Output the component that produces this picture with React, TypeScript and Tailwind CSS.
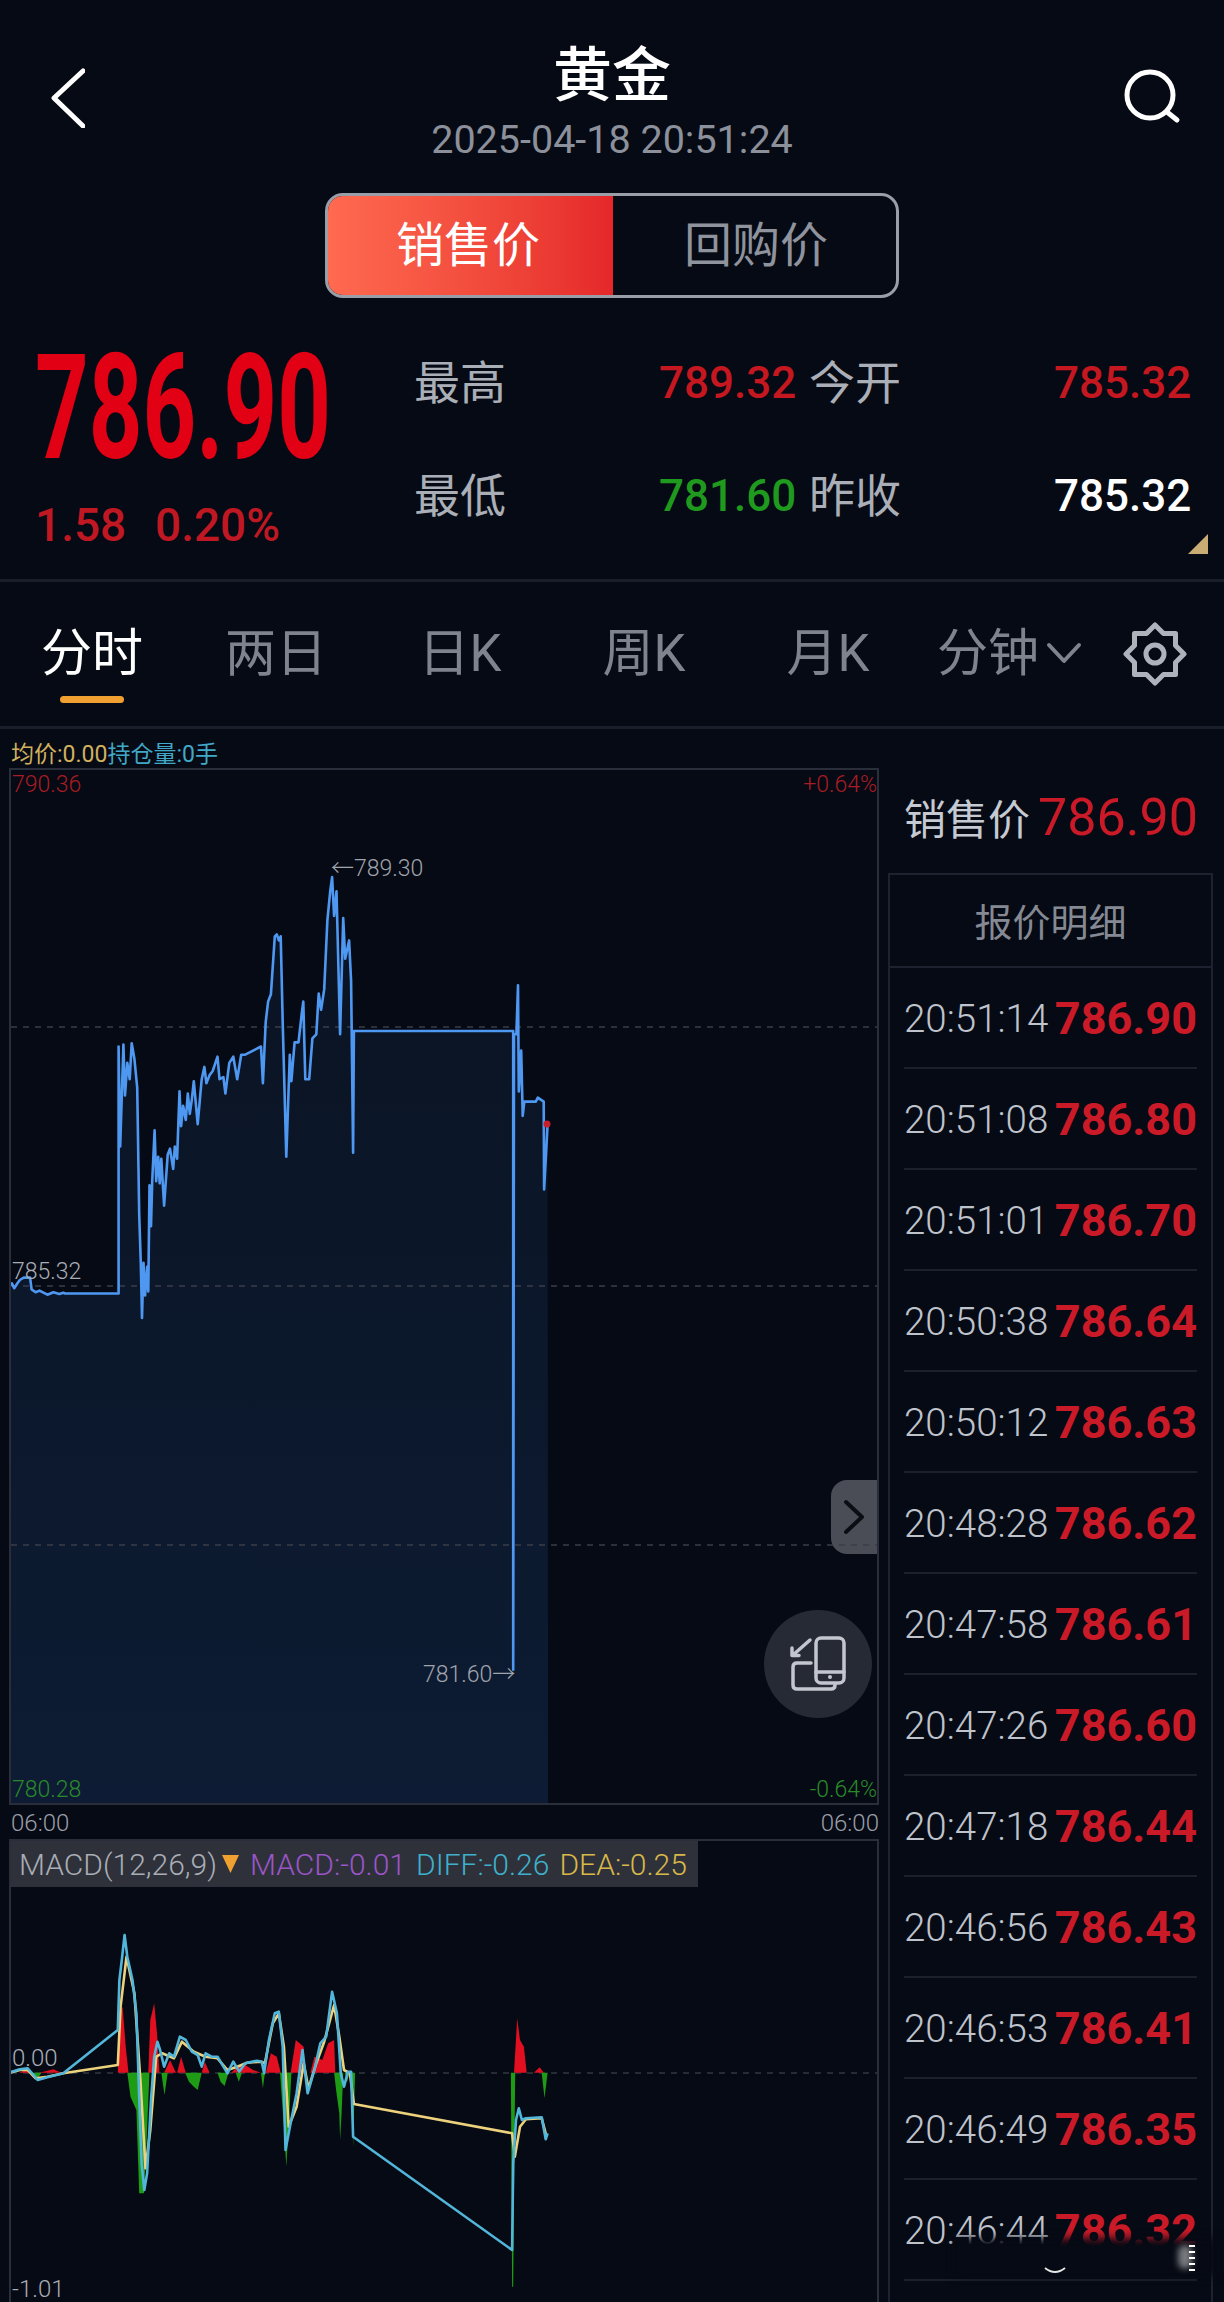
import React from "react";

const PRICE: number[][] = [[24,1385],[30,1380],[36,1392],[44,1380],[50,1372],[60,1366],[76,1366],[80,1395],[90,1402],[100,1398],[120,1408],[135,1402],[150,1406],[160,1403],[165,1405],[300,1405],[300,800],[304,1045],[312,795],[316,920],[322,840],[328,880],[333,792],[340,830],[347,900],[352,1210],[356,1330],[359,1465],[363,1330],[367,1410],[372,1340],[375,1400],[378,1140],[382,1240],[385,1130],[391,1005],[395,1130],[400,1070],[404,1135],[408,1075],[415,1190],[424,1065],[430,1050],[438,1100],[442,1045],[448,1075],[454,910],[458,995],[463,945],[470,980],[475,915],[480,965],[485,930],[490,885],[500,990],[510,880],[517,850],[522,890],[530,870],[538,860],[550,825],[555,880],[565,875],[570,915],[580,840],[590,825],[600,880],[610,820],[620,820],[640,810],[660,800],[665,890],[672,740],[678,690],[685,672],[695,530],[700,525],[705,540],[710,530],[715,740],[724,1070],[733,820],[737,885],[745,790],[755,790],[763,720],[767,690],[772,880],[782,880],[790,780],[800,770],[806,670],[812,710],[820,660],[828,490],[835,420],[840,385],[845,480],[851,420],[860,770],[868,485],[873,585],[883,540],[888,640],[893,1060],[895,762],[1298,762],[1298,2327],[1300,770],[1306,770],[1310,650],[1312,910],[1318,810],[1322,970],[1326,935],[1355,935],[1360,925],[1375,935],[1376,1150],[1381,1060],[1385,990]];

const DIFF: number[][] = [[24,878],[50,868],[70,865],[85,885],[95,900],[120,892],[160,880],[298,750],[302,600],[308,540],[315,465],[322,530],[335,600],[345,700],[352,950],[358,1150],[365,1230],[372,1180],[382,960],[390,830],[398,785],[405,810],[415,860],[428,820],[440,830],[455,770],[470,780],[485,815],[500,825],[510,860],[520,820],[535,830],[550,830],[575,880],[590,845],[605,875],[620,850],[650,842],[662,845],[668,880],[680,780],[695,700],[705,695],[715,800],[722,1110],[735,1030],[750,940],[765,810],[778,940],[795,870],[810,790],[825,770],[840,635],[852,700],[862,880],[870,920],[880,875],[888,875],[893,1070],[1295,1410],[1298,1150],[1305,1020],[1312,985],[1320,1020],[1330,1015],[1370,1012],[1380,1078],[1385,1060]];

const DEA: number[][] = [[24,878],[50,870],[70,870],[90,895],[120,890],[160,880],[298,855],[305,680],[320,530],[340,640],[355,900],[368,1165],[380,1050],[395,830],[410,820],[440,835],[460,785],[490,815],[520,830],[550,835],[575,870],[600,860],[625,848],[660,845],[670,850],[690,730],[705,700],[718,800],[730,1040],[750,980],[768,850],[780,925],[800,850],[820,785],[845,675],[858,770],[870,870],[885,880],[895,972],[1295,1060],[1302,1130],[1315,1040],[1330,1018],[1370,1015],[1382,1070]];

const RED_BARS: number[][][] = [
  [[48,878],[65,870],[80,878]],[[100,878],[135,868],[155,878]],
  [[298,878],[302,700],[310,680],[318,800],[325,878]],
  [[375,878],[380,720],[390,670],[397,760],[403,878]],
  [[415,878],[430,840],[445,878]],[[448,878],[458,830],[470,878]],[[510,878],[518,845],[530,878]],
  [[585,878],[600,860],[620,855],[640,870],[660,878]],
  [[672,878],[685,820],[700,830],[710,878]],[[735,878],[748,780],[768,800],[772,878]],
  [[785,878],[795,830],[815,840],[830,790],[845,780],[848,878]],
  [[1300,878],[1308,715],[1315,780],[1325,800],[1332,878]],[[1350,878],[1365,862],[1375,878]],
];

const GREEN_BARS: number[][][] = [
  [[80,878],[92,900],[105,878]],
  [[322,878],[330,950],[345,990],[352,1240],[364,1240],[370,1100],[378,878]],
  [[408,878],[416,945],[424,878]],[[468,878],[478,905],[490,920],[500,930],[510,878]],[[550,878],[558,905],[568,918],[578,878]],
  [[596,878],[604,905],[612,878]],[[660,878],[665,925],[670,878]],[[708,878],[718,1040],[724,1160],[730,1040],[737,878]],
  [[845,878],[850,930],[858,1000],[860,1080],[864,1000],[868,878]],[[872,878],[878,905],[884,878]],[[888,878],[893,1100],[898,878]],
  [[1292,878],[1293,1100],[1295,1520],[1298,1520],[1301,1100],[1303,878]],[[1370,878],[1377,955],[1385,878]],
];

const priceXY = (p: number[]) => `${(p[0] / 2.529).toFixed(1)},${(720 + p[1] / 2.45).toFixed(1)}`;
const macdXY = (p: number[]) => `${(p[0] / 2.529).toFixed(1)},${(1780 + p[1] / 3).toFixed(1)}`;

const QUOTES = [
  ["20:51:14", "786.90"],["20:51:08", "786.80"],["20:51:01", "786.70"],["20:50:38", "786.64"],
  ["20:50:12", "786.63"],["20:48:28", "786.62"],["20:47:58", "786.61"],["20:47:26", "786.60"],
  ["20:47:18", "786.44"],["20:46:56", "786.43"],["20:46:53", "786.41"],["20:46:49", "786.35"],
  ["20:46:44", "786.32"],
];

function PriceChart() {
  const line = PRICE.map(priceXY).join(" ");
  const area = `${line} 548,1803 9,1803`;
  return (
    <svg className="absolute inset-0 w-full h-full">
      <defs>
        <linearGradient id="fill" x1="0" y1="0" x2="0" y2="1">
          <stop offset="0" stopColor="#0a1322" />
          <stop offset="1" stopColor="#0d1c34" />
        </linearGradient>
      </defs>
      <g transform="translate(-11 -770)">
        <polygon points={area} fill="url(#fill)" />
        {[1027, 1286, 1545].map((y) => (
          <line key={y} x1="11" x2="877" y1={y} y2={y} stroke="#3a3e48" strokeWidth="1.5" strokeDasharray="6 6" />
        ))}
        <polyline points={line} fill="none" stroke="#4f98f2" strokeWidth="2.6" strokeLinejoin="round" />
        <circle cx="547" cy="1124" r="3.5" fill="#c81e2a" />
      </g>
    </svg>
  );
}

function MacdChart() {
  return (
    <svg className="absolute inset-0 w-full h-full">
      <g transform="translate(-11 -1841)">
        <line x1="11" x2="877" y1="2073" y2="2073" stroke="#33373f" strokeWidth="1.5" strokeDasharray="6 6" />
        {RED_BARS.map((b, i) => <polygon key={i} points={b.map(macdXY).join(" ")} fill="#e10f20" />)}
        {GREEN_BARS.map((b, i) => <polygon key={i} points={b.map(macdXY).join(" ")} fill="#1f9c16" />)}
        <polyline points={DEA.map(macdXY).join(" ")} fill="none" stroke="#ecd27c" strokeWidth="2.6" strokeLinejoin="round" />
        <polyline points={DIFF.map(macdXY).join(" ")} fill="none" stroke="#52b6da" strokeWidth="2.6" strokeLinejoin="round" />
      </g>
    </svg>
  );
}

function Stat({ label, value, color }: { label: string; value: string; color: string }) {
  return (
    <>
      <div className="text-[46px] leading-[113px] text-[#aaaeb7] whitespace-nowrap -ml-[1px]">{label}</div>
      <div className={`text-[44px] leading-[113px] font-medium whitespace-nowrap -ml-[1px] ${color}`}>{value}</div>
    </>
  );
}

export default function App() {
  return (
    <div className="relative w-[1224px] h-[2302px] overflow-hidden bg-[#060a14] font-[Roboto,'Noto_Sans_CJK_SC',sans-serif]">
      {/* header */}
      <header className="grid grid-cols-[1fr_auto_1fr] h-[193px] px-[45px]">
        <div className="pt-[68px]">
          <svg width="40" height="60" viewBox="0 0 40 60" fill="none" stroke="#ffffff" strokeWidth="5" strokeLinecap="round" strokeLinejoin="round">
            <path d="M 38 3 L 9 30 L 38 58" />
          </svg>
        </div>
        <div className="pt-[46px] text-center">
          <div className="text-[59px] leading-[59px] font-medium text-white">黄金</div>
          <div className="mt-[13px] text-[39.5px] leading-[44px] text-[#8c909b] whitespace-nowrap">2025-04-18 20:51:24</div>
        </div>
        <div className="flex justify-end pt-[68px] -mr-[2px]">
          <svg width="58" height="56" viewBox="0 0 58 56" fill="none" stroke="#ffffff" strokeWidth="5" strokeLinecap="round">
            <circle cx="27" cy="27" r="23" />
            <path d="M 44 44 L 54 52" />
          </svg>
        </div>
      </header>

      {/* sell / buy-back toggle */}
      <div className="flex w-[574px] h-[105px] ml-[325px] rounded-[18px] border-[3px] border-[#9a9ea9] overflow-hidden">
        <div className="flex-1 flex items-center justify-center pr-[5px] bg-gradient-to-r from-[#ff6a50] to-[#e5272a] text-[48px] text-white">销售价</div>
        <div className="flex-1 flex items-center justify-center pl-[3px] text-[48px] text-[#8f939d]">回购价</div>
      </div>

      {/* quote summary */}
      <section className="relative flex h-[284px] pt-[29px] border-b-[3px] border-[#1a1e2a]">
        <div className="w-[415px] pl-[35px] pt-[9px] shrink-0">
          <div className="w-[290px] h-[146px] text-[146px] leading-[146px] font-bold text-[#e20014] origin-left scale-x-[0.642] whitespace-nowrap">786.90</div>
          <div className="flex mt-[17px] text-[46px] leading-[52px] font-medium text-[#bf1822]">
            <span className="w-[120px]">1.58</span>
            <span>0.20%</span>
          </div>
        </div>
        <div className="grid grid-cols-[245px_150px_245px_auto] h-[226px]">
          <Stat label="最高" value="789.32" color="text-[#c4171f]" />
          <Stat label="今开" value="785.32" color="text-[#c4171f]" />
          <Stat label="最低" value="781.60" color="text-[#1f9a1f]" />
          <Stat label="昨收" value="785.32" color="text-white" />
        </div>
        <svg className="absolute right-[16px] bottom-[25px]" width="20" height="20" viewBox="0 0 20 20">
          <polygon points="20,0 20,20 0,20" fill="#c9ad75" />
        </svg>
      </section>

      {/* period tabs */}
      <nav className="flex items-start h-[147px] pt-[44px] border-b-[3px] border-[#1a1e2a]">
        <div className="w-[184px] flex flex-col items-center">
          <span className="text-[51px] leading-[56px] text-white">分时</span>
          <span className="mt-[14px] w-[64px] h-[7px] rounded-full bg-[#f0a030]" />
        </div>
        {["两日", "日K", "周K", "月K"].map((t) => (
          <div key={t} className="w-[184px] text-center text-[51px] leading-[56px] text-[#7f838d]">{t}</div>
        ))}
        <div className="ml-[17px] w-[109px] text-[51px] leading-[56px] text-[#7f838d]">分钟</div>
        <svg className="mt-[16px] shrink-0" width="36" height="22" viewBox="0 0 36 22" fill="none" stroke="#7f838d" strokeWidth="4" strokeLinecap="round" strokeLinejoin="round">
          <path d="M 3 3 L 18 19 L 33 3" />
        </svg>
        <svg className="ml-[41px] -mt-[4px] shrink-0" width="64" height="64" viewBox="0 0 64 64" fill="none" stroke="#aeb2bb" strokeWidth="5" strokeLinejoin="round">
          <path d="M 32 3 L 40.5 11.5 L 52.5 11.5 L 52.5 23.5 L 61 32 L 52.5 40.5 L 52.5 52.5 L 40.5 52.5 L 32 61 L 23.5 52.5 L 11.5 52.5 L 11.5 40.5 L 3 32 L 11.5 23.5 L 11.5 11.5 L 23.5 11.5 Z" />
          <circle cx="32" cy="32" r="9" />
        </svg>
      </nav>

      <main className="flex pl-[9px]">
        {/* charts */}
        <div className="w-[870px] shrink-0">
          <div className="h-[39px] pt-[14px] pl-[2px] text-[23px] leading-[24px] whitespace-nowrap">
            <span className="text-[#d1b05f]">均价:0.00</span>
            <span className="text-[#41a8c8]">持仓量:0手</span>
          </div>
          <div className="relative h-[1037px] border-2 border-[#2a2e3a] text-[23px] leading-[24px] font-light">
            <div className="absolute right-0 top-[710px] w-[46px] h-[74px] rounded-l-[16px] bg-[#4a4d55] flex items-center justify-center">
              <svg width="22" height="36" viewBox="0 0 22 36" fill="none" stroke="#0c0e14" strokeWidth="4" strokeLinecap="round" strokeLinejoin="round">
                <path d="M 3 3 L 19 18 L 3 33" />
              </svg>
            </div>
            <PriceChart />
            <span className="absolute left-[1px] top-[3px] text-[#a81c25]">790.36</span>
            <span className="absolute right-0 top-[3px] text-[#a81c25]">+0.64%</span>
            <span className="absolute left-[1px] top-[490px] text-[#a9adb5]">785.32</span>
            <span className="absolute left-[320px] top-[87px] text-[#a0a4ac]">←789.30</span>
            <span className="absolute left-[412px] top-[893px] text-[#a0a4ac]">781.60→</span>
            <span className="absolute left-[1px] bottom-[1px] text-[#2a8a2a]">780.28</span>
            <span className="absolute right-0 bottom-[1px] text-[#2a8a2a]">-0.64%</span>
            <div className="absolute left-[753px] top-[840px] w-[108px] h-[108px] rounded-full bg-[#252a35] flex items-center justify-center">
              <svg width="108" height="108" viewBox="764 1610 108 108" fill="none" stroke="#c3c6ce" strokeWidth="3.5" strokeLinecap="round" strokeLinejoin="round">
                <rect x="816" y="1638" width="28" height="45" rx="5" />
                <path d="M 816 1672 H 844" />
                <circle cx="830" cy="1677" r="2" fill="#c3c6ce" stroke="none" />
                <path d="M 811 1663 H 797 Q 793 1663 793 1667 V 1685 Q 793 1689 797 1689 H 831 Q 835 1689 835 1685" />
                <path d="M 810 1640 L 793 1655 M 792 1648 V 1655.5 H 799" />
              </svg>
            </div>
          </div>
          <div className="flex justify-between items-center h-[34px] pl-[2px] pt-[1px] text-[24px] font-light text-[#9a9ea8]">
            <span>06:00</span>
            <span>06:00</span>
          </div>
          <div className="relative h-[465px] border-2 border-b-0 border-[#2a2e3a]">
            <div className="flex items-center w-[687px] h-[46px] pl-[8px] bg-[#2e313a] text-[30px] font-light whitespace-nowrap">
              <span className="text-[#a9adb5]">MACD(12,26,9)</span>
              <svg className="ml-[5px] mr-[11px]" width="17" height="18" viewBox="0 0 17 18">
                <polygon points="0,0 17,0 8.5,18" fill="#f0a030" />
              </svg>
              <span className="text-[#9a55c8]">MACD:-0.01</span>
              <span className="ml-[10px] text-[#3fb0cc]">DIFF:-0.26</span>
              <span className="ml-[10px] text-[#d8b848]">DEA:-0.25</span>
            </div>
            <MacdChart />
            <span className="absolute left-[1px] top-[205px] text-[24px] leading-[24px] font-light text-[#a9adb5]">0.00</span>
            <span className="absolute left-[1px] top-[438px] text-[24px] leading-[20px] font-light text-[#a9adb5]">-1.01</span>
          </div>
        </div>

        {/* quote detail */}
        <aside className="ml-[9px] w-[325px] shrink-0">
          <div className="h-[144px] pt-[59px] pl-[16px] flex items-baseline whitespace-nowrap">
            <span className="text-[42px] leading-[60px] text-[#c5c9d2]">销售价</span>
            <span className="ml-[8px] text-[52px] leading-[60px] text-[#cb1a27]">786.90</span>
          </div>
          <div className="border-2 border-b-0 border-[#1e2230] h-[1430px]">
            <div className="h-[93px] pt-[5px] flex items-center justify-center border-b-2 border-[#1e2230] text-[38px] text-[#858993]">报价明细</div>
            <div className="px-[14px]">
              {QUOTES.map(([time, price]) => (
                <div key={time} className="flex items-center justify-between h-[101px] pt-[3px] border-b-2 border-[#1c202b] whitespace-nowrap">
                  <span className="text-[38.5px] font-light text-[#bfc3cc]">{time}</span>
                  <span className="text-[45px] font-bold text-[#cb1a27]">{price}</span>
                </div>
              ))}
            </div>
          </div>
        </aside>
      </main>

      {/* watermark smudge that covers the foot of the last row */}
      <div className="absolute left-[955px] top-[2238px] w-[262px] h-[38px] bg-[#060a14] blur-[4px]" />
      <svg className="absolute left-[1040px] top-[2262px]" width="30" height="16" viewBox="0 0 30 16" fill="none" stroke="#e6e6e6" strokeWidth="2">
        <path d="M 5 6 Q 15 14 25 6" />
      </svg>
      <div className="absolute left-[1178px] top-[2245px] w-[14px] h-[24px] rounded-full bg-[#77797e] blur-[3px]" />
      <div className="absolute left-[1189px] top-[2245px] w-[6px] h-[26px] bg-[repeating-linear-gradient(to_bottom,#ffffff_0,#ffffff_2px,transparent_2px,transparent_6px)]" />
    </div>
  );
}
